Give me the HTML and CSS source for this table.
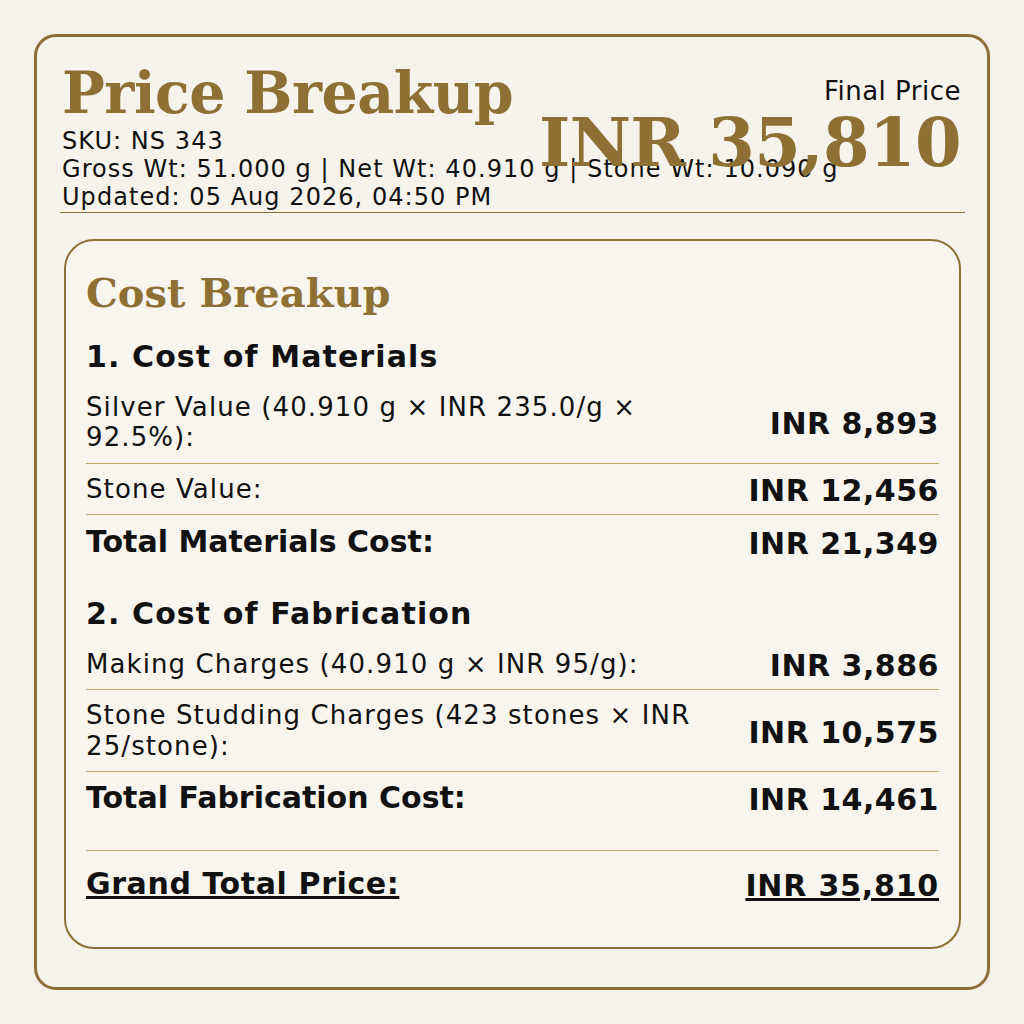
FILE: index.html
```html
<!DOCTYPE html>
<html lang="en">
<head>
<meta charset="utf-8">
<title>Price Breakup</title>
<link rel="stylesheet" href="styles.css">
</head>
<body>
<div class="page">
  <div class="card">
    <header class="header">
      <div class="header-left">
        <h1 class="title">Price Breakup</h1>
        <div class="meta">SKU: NS 343</div>
        <div class="meta">Gross Wt: 51.000 g | Net Wt: 40.910 g | Stone Wt: 10.090 g</div>
        <div class="meta">Updated: 05 Aug 2026, 04:50 PM</div>
      </div>
      <div class="header-right">
        <div class="final-label">Final Price</div>
        <div class="final-value">INR 35,810</div>
      </div>
    </header>

    <section class="breakup">
      <h2 class="breakup-title">Cost Breakup</h2>

      <div class="section">
        <h3 class="section-title">1. Cost of Materials</h3>
        <div class="row">
          <div class="label">Silver Value (40.910 g × INR 235.0/g × 92.5%):</div>
          <div class="amount">INR 8,893</div>
        </div>
        <div class="row">
          <div class="label">Stone Value:</div>
          <div class="amount">INR 12,456</div>
        </div>
        <div class="row total">
          <div class="label">Total Materials Cost:</div>
          <div class="amount">INR 21,349</div>
        </div>
      </div>

      <div class="section section-second">
        <h3 class="section-title">2. Cost of Fabrication</h3>
        <div class="row">
          <div class="label">Making Charges (40.910 g × INR 95/g):</div>
          <div class="amount">INR 3,886</div>
        </div>
        <div class="row">
          <div class="label">Stone Studding Charges (423 stones × INR 25/stone):</div>
          <div class="amount">INR 10,575</div>
        </div>
        <div class="row total">
          <div class="label">Total Fabrication Cost:</div>
          <div class="amount">INR 14,461</div>
        </div>
      </div>

      <div class="row grand">
        <div class="label">Grand Total Price:</div>
        <div class="amount">INR 35,810</div>
      </div>
    </section>
  </div>
</div>
</body>
</html>
```

FILE: styles.css
```css
* {
  box-sizing: border-box;
}

html, body {
  margin: 0;
  padding: 0;
  background: #f5f2eb;
}

body {
  font-family: "DejaVu Sans", Verdana, sans-serif;
  color: #111111;
}

.page {
  padding: 34px;
  width: 1024px;
  height: 1024px;
}

.card {
  width: 956px;
  height: 956px;
  border: 3px solid #8e7034;
  border-radius: 22px;
  background: #f6f3ec;
  padding: 21px 22px 38px 23px;
  display: flex;
  flex-direction: column;
}

.header {
  display: flex;
  align-items: flex-start;
  border-bottom: 1px solid #8e7034;
  padding-bottom: 1px;
}

.header-left {
  flex: 1 1 0;
  min-width: 0;
  white-space: nowrap;
  padding-left: 2px;
}

.title {
  margin: 1px 0 1px 0;
  font-family: "DejaVu Serif", Georgia, serif;
  font-weight: bold;
  font-size: 57px;
  letter-spacing: -0.5px;
  line-height: normal;
  color: #8e7034;
}

.meta {
  font-size: 24px;
  letter-spacing: 1.05px;
  line-height: normal;
}

.header-right {
  flex: none;
  text-align: right;
  margin: 18px 4px 0 0;
  position: relative;
}

.final-label {
  font-size: 26px;
  letter-spacing: 0.5px;
  line-height: normal;
}

.final-value {
  font-family: "DejaVu Serif", Georgia, serif;
  font-weight: bold;
  font-size: 67px;
  letter-spacing: -0.6px;
  line-height: 1.1;
  color: #8e7034;
  white-space: nowrap;
}

.breakup {
  flex: 1;
  margin: 26px 4px 0 4px;
  border: 2px solid #8e7034;
  border-radius: 30px;
  background: #f8f5ee;
  padding: 28px 20px 20px 20px;
}

.breakup-title {
  margin: 0 0 23px 0;
  font-family: "DejaVu Serif", Georgia, serif;
  font-weight: bold;
  font-size: 40px;
  line-height: normal;
  color: #8e7034;
}

.section-title {
  margin: 0 0 8px 0;
  font-size: 30px;
  font-weight: bold;
  letter-spacing: 1.1px;
  line-height: normal;
}

.section-second {
  margin-top: 29px;
}

.row {
  display: flex;
  align-items: center;
  justify-content: space-between;
  padding: 10px 0;
  border-bottom: 1px solid #c3a970;
}

.label {
  max-width: 75%;
  font-size: 26px;
  letter-spacing: 1.1px;
  line-height: 1.17;
}

.amount {
  font-size: 30px;
  font-weight: bold;
  letter-spacing: 0.5px;
  line-height: 1;
  white-space: nowrap;
  text-align: right;
  padding-top: 2px;
  margin-bottom: -2px;
}

.row.total {
  border-bottom: none;
  padding: 11.5px 0 10px 0;
}

.row.total .label {
  font-size: 30px;
  font-weight: bold;
  letter-spacing: 0;
  line-height: 1;
}

.row.grand {
  margin-top: 26.5px;
  border-top: 1px solid #c3a970;
  border-bottom: none;
  padding: 18px 0;
}

.row.grand .label {
  font-size: 30px;
  font-weight: bold;
  letter-spacing: 0.6px;
  line-height: 1;
  text-decoration: underline;
}

.row.grand .amount {
  letter-spacing: 0.8px;
  text-decoration: underline;
}
```
